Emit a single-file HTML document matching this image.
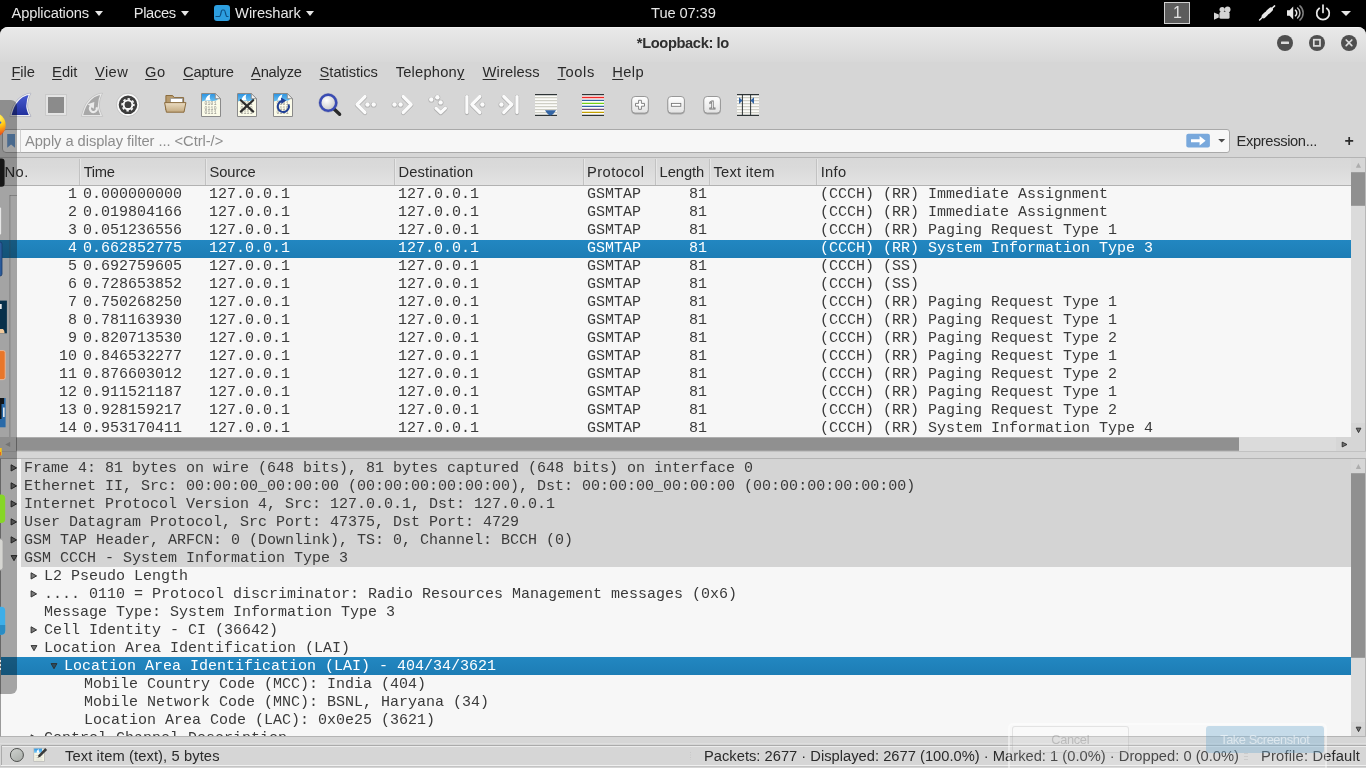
<!DOCTYPE html>
<html lang="en">
<head>
<meta charset="utf-8">
<title>*Loopback: lo</title>
<style>
html,body{margin:0;padding:0;}
body{width:1366px;height:768px;overflow:hidden;position:relative;background:#000;font-family:"Liberation Sans","DejaVu Sans",sans-serif;font-size:14.6px;color:#2e2e2e;}
#root{position:absolute;left:0;top:0;width:1366px;height:768px;overflow:hidden;will-change:transform;}
.abs{position:absolute;}
.t{position:absolute;white-space:nowrap;line-height:20px;}
/* top bar */
#topbar{position:absolute;left:0;top:0;width:1366px;height:27px;background:#000;color:#e6e6e6;}
#topbar .t{top:3px;font-size:14.8px;}
.tri{position:absolute;width:0;height:0;border-left:4.3px solid transparent;border-right:4.3px solid transparent;border-top:5px solid #e6e6e6;top:10.8px;}
/* window */
#win{position:absolute;left:0;top:27px;width:1366px;height:741px;background:#d6d6d6;border-radius:8px 8px 0 0;overflow:hidden;}
#titlebar{position:absolute;left:0;top:0;width:1366px;height:35px;background:linear-gradient(#e9e9e9,#d8d8d8);border-top:1px solid #f4f4f4;box-sizing:border-box;}
#title{position:absolute;left:0;width:1366px;text-align:center;top:6px;font-weight:bold;font-size:14.6px;color:#2f2f2f;line-height:20px;}
.wb{position:absolute;top:6.7px;width:16px;height:16px;border-radius:8px;background:#4f4f4f;}
/* menu */
#menu .t{top:35px;font-size:14.8px;color:#2a2a2a;}
.t u{text-decoration:underline;text-decoration-thickness:1px;text-underline-offset:2px;}
/* filter */
#filter{position:absolute;left:20px;top:102px;width:1210px;height:24px;background:#f7f7f7;border:1px solid #a9a9a9;border-radius:0 3px 3px 0;box-sizing:border-box;}
/* panes */
.mono{font-family:"Liberation Mono","DejaVu Sans Mono",monospace;font-size:15px;color:#3a3a3a;}
#plist{position:absolute;left:0;top:130px;width:1366px;height:294px;border-top:1px solid #b4b4b4;box-sizing:border-box;background:#f7f7f7;overflow:hidden;}
#phead{position:absolute;left:0;top:0;width:1351px;height:28px;background:linear-gradient(#d8d8d8,#dadada 35%,#e3e3e3);border-bottom:1px solid #b2b2b2;box-sizing:border-box;}
#phead i{position:absolute;top:1px;width:1px;height:26px;background:#c2c2c2;box-shadow:1px 0 0 #e6e6e6;}
.row{position:absolute;left:0;width:1351px;height:18px;line-height:18px;white-space:pre;}
.row span{position:absolute;top:0;}
.sel{background:linear-gradient(#2287c1,#1d7db5);color:#fff;}
#detail{position:absolute;left:0;top:431px;width:1366px;height:279px;border-top:1px solid #b4b4b4;border-left:1px solid #9a9a9a;border-bottom:1px solid #b4b4b4;box-sizing:border-box;background:#f7f7f7;overflow:hidden;}
.drow{position:absolute;left:0;width:1351px;height:18px;line-height:18px;white-space:pre;}
.drow.g{background:#d4d4d4;left:20px;width:1330px;}
.drow b{position:absolute;top:0;font-weight:normal;}
</style>
</head>
<body>
<div id="root">
<div id="topbar">
  <div class="tri" style="left:94.5px"></div><div class="tri" style="left:181px"></div><div class="tri" style="left:305.5px"></div>
  <svg class="abs" style="left:214px;top:5px" width="16" height="16" viewBox="0 0 16 16"><rect x="0" y="0" width="16" height="16" rx="3" fill="#2d9fe0"/><path d="M1.5 11.5 H5.5 C7 11.5 6.8 5 8.3 5 H10.2 C11.5 5 11.5 11.5 13 11.5 H14.5" fill="none" stroke="#0d4f82" stroke-width="1.2"/></svg>
  <div class="abs" style="left:1164px;top:2px;width:26px;height:22px;background:#5c5c5c;border:1px solid #cfcfcf;box-sizing:border-box;"></div>
  <div class="t" style="left:1173px;color:#e0e0e0;font-size:16px;top:3px">1</div>
  <div class="tri" style="left:1341px;border-left-width:5px;border-right-width:5px;border-top-width:5.2px;top:10.8px"></div>
</div>
<div id="win">
  <div id="titlebar">
    <div class="wb" style="left:1277px"></div>
    <div class="wb" style="left:1309px"></div>
    <div class="wb" style="left:1341px"></div>
  </div>
  <svg class="abs" style="left:0;top:61px" width="780" height="36" viewBox="0 88 780 36">
<defs>
<linearGradient id="gfin" x1="0" y1="0" x2="0" y2="1"><stop offset="0" stop-color="#4c5fd6"/><stop offset="1" stop-color="#1e2d9a"/></linearGradient>
<linearGradient id="gfold" x1="0" y1="0" x2="0" y2="1"><stop offset="0" stop-color="#eadcc2"/><stop offset="1" stop-color="#c4aa80"/></linearGradient>
<linearGradient id="gbtn" x1="0" y1="0" x2="0" y2="1"><stop offset="0" stop-color="#ffffff"/><stop offset="1" stop-color="#e2e2e2"/></linearGradient>
<linearGradient id="ghead" x1="0" y1="0" x2="0" y2="1"><stop offset="0" stop-color="#2e95e2"/><stop offset="1" stop-color="#6cc0f0"/></linearGradient>
<radialGradient id="gglass" cx="0.4" cy="0.35" r="0.7"><stop offset="0" stop-color="#ffffff"/><stop offset="1" stop-color="#c4c4c4"/></radialGradient>
<path id="fin" d="M31 93.1 C25.4 93.6 19.4 96.5 14.65 103.4 C12.4 107 10.9 111.5 9.8 116.3 L31.1 116.4 C29.2 112.5 27.7 108.5 27.7 105.9 C27.7 102 28.7 97.5 31 93.1 Z"/>
<clipPath id="finclip"><use href="#fin"/></clipPath>
<g id="doc">
 <path d="M201.5 93.5 H215.3 L220.5 98.7 V116.5 H201.5 Z" fill="#fbfbe9" stroke="#8a8a8a" stroke-width="1"/>
 <path d="M202 94 H215 L217.5 96.5 V100 C212 102.5 207 99 202 101.5 Z" fill="url(#ghead)"/>
 <path d="M210.5 94.3 C207.5 95.3 206 97.6 205.4 100.2 L210.6 100.2 C209.6 98.4 209.4 96.3 210.5 94.3 Z" fill="#fff"/>
 <path d="M215.3 93.5 V98.7 H220.5 Z" fill="#f2f2f2" stroke="#8a8a8a" stroke-width="0.9" stroke-linejoin="round"/>
 <g font-family="'Liberation Mono','DejaVu Sans Mono',monospace" font-size="4.7" fill="#8e8e88" letter-spacing="0.2">
  <text x="204.6" y="104.8">0101</text><text x="204.6" y="109.6">0110</text><text x="204.6" y="114.3">0111</text>
 </g>
</g>
<g id="chevL"><path d="M8.6 0 L0.6 8 L8.6 16" fill="none" stroke="#a6a6a6" stroke-width="4.3" stroke-linecap="round" stroke-linejoin="round" transform="translate(0,0.5)" opacity="0.8"/><path d="M8.6 0 L0.6 8 L8.6 16" fill="none" stroke="#fbfbfb" stroke-width="3.2" stroke-linecap="round" stroke-linejoin="round"/></g>
<g id="chevR"><path d="M0 0 L8 8 L0 16" fill="none" stroke="#a6a6a6" stroke-width="4.3" stroke-linecap="round" stroke-linejoin="round" transform="translate(0,0.5)" opacity="0.8"/><path d="M0 0 L8 8 L0 16" fill="none" stroke="#fbfbfb" stroke-width="3.2" stroke-linecap="round" stroke-linejoin="round"/></g>
<g id="dot"><circle cx="0" cy="0.25" r="2.85" fill="#a6a6a6" opacity="0.8"/><circle cx="0" cy="0" r="2.2" fill="#fbfbfb"/></g>
<g id="vbar"><path d="M0 0 V16" stroke="#a6a6a6" stroke-width="4.3" stroke-linecap="round" transform="translate(0,0.5)" opacity="0.8"/><path d="M0 0 V16" stroke="#fbfbfb" stroke-width="3.2" stroke-linecap="round"/></g>
<g id="zbtn"><rect x="0.2" y="1.2" width="17.3" height="17.2" rx="3.8" fill="#8a8a8a" opacity="0.6"/><rect x="0.5" y="0.5" width="16.6" height="16.6" rx="3.4" fill="url(#gbtn)" stroke="#8e8e8e" stroke-width="0.9"/></g>
<g id="lines"><rect x="0" y="0.5" width="22" height="21" fill="#fbfbf8"/>
 <path d="M0 3.5H22M0 6.5H22M0 9.5H22M0 12.5H22M0 15.5H22M0 18.5H22" stroke="#cfcfc5" stroke-width="1.25"/>
 <path d="M0 0.6H22M0 21.4H22" stroke="#2e3436" stroke-width="1.2"/></g>
</defs>
<!-- 1 start capture -->
<use href="#fin" fill="url(#gfin)"/>
<use href="#fin" fill="none" stroke="#f1f1f4" stroke-width="3" stroke-linejoin="round" clip-path="url(#finclip)"/>
<use href="#fin" fill="none" stroke="#b9b9b9" stroke-width="0.6" stroke-linejoin="round"/>
<!-- 2 stop -->
<rect x="45.6" y="94.6" width="20.8" height="20.8" fill="#e4e4e4" stroke="#c6c6c6" stroke-width="0.9"/>
<rect x="48" y="97" width="16" height="16" fill="#8b8b8b"/>
<!-- 3 restart -->
<g transform="translate(71.6,0)">
<use href="#fin" fill="#a8a8a8"/>
<use href="#fin" fill="none" stroke="#e9e9e9" stroke-width="3" stroke-linejoin="round" clip-path="url(#finclip)"/>
<use href="#fin" fill="none" stroke="#bdbdbd" stroke-width="0.6" stroke-linejoin="round"/>
<path d="M24.9 107.2 A3.4 3.4 0 1 1 19.6 106" fill="none" stroke="#ebebeb" stroke-width="2.1"/>
<path d="M16 104.3 L22.7 102.1 L22.2 108.7 Z" fill="#ebebeb"/>
</g>
<!-- 4 options gear -->
<circle cx="128" cy="104.8" r="10.3" fill="#3d3d3d" stroke="#f8f8f8" stroke-width="2"/>
<circle cx="128" cy="104.8" r="11.5" fill="none" stroke="#b4b4b4" stroke-width="0.6"/>
<circle cx="128" cy="104.8" r="5.9" fill="none" stroke="#f6f6f6" stroke-width="1.6" stroke-dasharray="2.4 2.234" transform="rotate(-10 128 104.8)"/>
<circle cx="128" cy="104.8" r="4.3" fill="none" stroke="#f6f6f6" stroke-width="2.1"/>
<circle cx="128" cy="104.8" r="3.3" fill="#3d3d3d"/>
<!-- 5 open folder -->
<path d="M165.9 95.5 H172.6 L174.2 97.6 H183.6 V110 H165.9 Z" fill="#b79a6c" stroke="#8b6c3e" stroke-width="1" stroke-linejoin="round"/>
<rect x="170.6" y="98.4" width="12" height="7" fill="#ffffff" stroke="#9a9a9a" stroke-width="0.8"/>
<path d="M164.6 102.6 H185.9 L184 112.2 H166.4 Z" fill="url(#gfold)" stroke="#8b6c3e" stroke-width="1" stroke-linejoin="round"/>
<!-- 6-8 docs -->
<use href="#doc"/>
<use href="#doc" x="36"/>
<path d="M240.8 100.2 L253.2 111.6 M253.2 100.2 L240.8 111.6" stroke="#2b2b2b" stroke-width="2.2" stroke-linecap="round"/>
<use href="#doc" x="72"/>
<path d="M288.5 104.3 A5.6 5.6 0 1 1 282 101" fill="none" stroke="#1f3f96" stroke-width="2"/>
<path d="M281 97.6 L286.2 100.6 L281.4 104 Z" fill="#1f3f96"/>
<!-- 9 find -->
<path d="M334.3 109.3 L339.6 114.3" stroke="#2a2a2a" stroke-width="3.4" stroke-linecap="round"/>
<circle cx="328.2" cy="102.8" r="8" fill="url(#gglass)" stroke="#3a4cb4" stroke-width="2.5"/><circle cx="328.2" cy="102.8" r="9.3" fill="none" stroke="#2a3890" stroke-width="0.5" opacity="0.6"/>
<!-- 10 back -->
<use href="#chevL" x="356.4" y="96.5"/><use href="#dot" x="367.5" y="104.5"/><use href="#dot" x="373.7" y="104.5"/>
<!-- 11 forward -->
<use href="#dot" x="394.5" y="104.5"/><use href="#dot" x="400.6" y="104.5"/><use href="#chevR" x="403.2" y="96.5"/>
<!-- 12 goto -->
<use href="#dot" x="431.3" y="99.5"/><use href="#dot" x="437.4" y="97.3"/><use href="#dot" x="440.6" y="102.4"/>
<path d="M436 108.1 L440.7 112.6 L445.4 108.1" fill="none" stroke="#a6a6a6" stroke-width="4.3" stroke-linecap="round" stroke-linejoin="round" transform="translate(0,0.5)" opacity="0.8"/>
<path d="M436 108.1 L440.7 112.6 L445.4 108.1" fill="none" stroke="#fbfbfb" stroke-width="3.2" stroke-linecap="round" stroke-linejoin="round"/>
<!-- 13 first -->
<use href="#vbar" x="466.9" y="96.5"/><use href="#chevL" x="471.2" y="96.5"/><use href="#dot" x="482.4" y="104.5"/>
<!-- 14 last -->
<use href="#dot" x="501.4" y="104.5"/><use href="#chevR" x="503.8" y="96.5"/><use href="#vbar" x="517" y="96.5"/>
<!-- 15 autoscroll -->
<use href="#lines" x="535" y="94"/>
<path d="M545 110.2 H556 C554.6 112.6 552.4 115.4 550.5 115.6 C548.6 115.4 546.4 112.6 545 110.2 Z" fill="#3465a4"/>
<!-- 16 colorize -->
<rect x="582" y="94.5" width="22" height="21" fill="#fdfdfb"/>
<path d="M582 97.5H604" stroke="#ef2929" stroke-width="1.3"/>
<path d="M582 100.45H604" stroke="#3465a4" stroke-width="1.3"/>
<path d="M582 103.4H604" stroke="#73d216" stroke-width="1.3"/>
<path d="M582 106.35H604" stroke="#3465a4" stroke-width="1.3"/>
<path d="M582 109.4H604" stroke="#75507b" stroke-width="1.3"/>
<path d="M582 112.4H604" stroke="#c4a000" stroke-width="1.3"/>
<path d="M582 94.6H604M582 115.4H604" stroke="#2e3436" stroke-width="1.2"/>
<!-- 17-19 zoom -->
<use href="#zbtn" x="631.2" y="96"/>
<path d="M638.6 100.3 h2.8 v3.1 h3.1 v2.8 h-3.1 v3.1 h-2.8 v-3.1 h-3.1 v-2.8 h3.1 Z" fill="#fff" stroke="#777" stroke-width="0.9" stroke-linejoin="round"/>
<use href="#zbtn" x="667.3" y="96"/>
<rect x="671.4" y="103.4" width="9.4" height="2.9" fill="#fff" stroke="#777" stroke-width="0.9"/>
<use href="#zbtn" x="703.3" y="96"/>
<text x="712.1" y="109.2" text-anchor="middle" font-family="'Liberation Sans','DejaVu Sans',sans-serif" font-weight="bold" font-size="11.5" fill="#fff" stroke="#777" stroke-width="0.8">1</text>
<!-- 20 resize columns -->
<use href="#lines" x="737" y="94"/>
<path d="M742.4 94.5V115.5M750.6 94.5V115.5" stroke="#2e3436" stroke-width="1"/>
<path d="M739 97.2 V104 L742.6 100.6 Z" fill="#3465a4"/>
<path d="M754 97.2 V104 L750.4 100.6 Z" fill="#3465a4"/>
</svg>

  <div id="filter"></div>
  <div id="plist">
    <div id="phead"><i style="left:79px"></i><i style="left:205px"></i><i style="left:394px"></i><i style="left:583px"></i><i style="left:655px"></i><i style="left:709px"></i><i style="left:816px"></i></div>
    <div class="row mono" style="top:28px"><span style="left:0;width:77px;text-align:right">1</span><span style="left:83px">0.000000000</span><span style="left:209px">127.0.0.1</span><span style="left:398px">127.0.0.1</span><span style="left:587px">GSMTAP</span><span style="left:653px;width:54px;text-align:right">81</span><span style="left:820px">(CCCH) (RR) Immediate Assignment</span></div>
<div class="row mono" style="top:46px"><span style="left:0;width:77px;text-align:right">2</span><span style="left:83px">0.019804166</span><span style="left:209px">127.0.0.1</span><span style="left:398px">127.0.0.1</span><span style="left:587px">GSMTAP</span><span style="left:653px;width:54px;text-align:right">81</span><span style="left:820px">(CCCH) (RR) Immediate Assignment</span></div>
<div class="row mono" style="top:64px"><span style="left:0;width:77px;text-align:right">3</span><span style="left:83px">0.051236556</span><span style="left:209px">127.0.0.1</span><span style="left:398px">127.0.0.1</span><span style="left:587px">GSMTAP</span><span style="left:653px;width:54px;text-align:right">81</span><span style="left:820px">(CCCH) (RR) Paging Request Type 1</span></div>
<div class="row mono sel" style="top:82px"><span style="left:0;width:77px;text-align:right">4</span><span style="left:83px">0.662852775</span><span style="left:209px">127.0.0.1</span><span style="left:398px">127.0.0.1</span><span style="left:587px">GSMTAP</span><span style="left:653px;width:54px;text-align:right">81</span><span style="left:820px">(CCCH) (RR) System Information Type 3</span></div>
<div class="row mono" style="top:100px"><span style="left:0;width:77px;text-align:right">5</span><span style="left:83px">0.692759605</span><span style="left:209px">127.0.0.1</span><span style="left:398px">127.0.0.1</span><span style="left:587px">GSMTAP</span><span style="left:653px;width:54px;text-align:right">81</span><span style="left:820px">(CCCH) (SS)</span></div>
<div class="row mono" style="top:118px"><span style="left:0;width:77px;text-align:right">6</span><span style="left:83px">0.728653852</span><span style="left:209px">127.0.0.1</span><span style="left:398px">127.0.0.1</span><span style="left:587px">GSMTAP</span><span style="left:653px;width:54px;text-align:right">81</span><span style="left:820px">(CCCH) (SS)</span></div>
<div class="row mono" style="top:136px"><span style="left:0;width:77px;text-align:right">7</span><span style="left:83px">0.750268250</span><span style="left:209px">127.0.0.1</span><span style="left:398px">127.0.0.1</span><span style="left:587px">GSMTAP</span><span style="left:653px;width:54px;text-align:right">81</span><span style="left:820px">(CCCH) (RR) Paging Request Type 1</span></div>
<div class="row mono" style="top:154px"><span style="left:0;width:77px;text-align:right">8</span><span style="left:83px">0.781163930</span><span style="left:209px">127.0.0.1</span><span style="left:398px">127.0.0.1</span><span style="left:587px">GSMTAP</span><span style="left:653px;width:54px;text-align:right">81</span><span style="left:820px">(CCCH) (RR) Paging Request Type 1</span></div>
<div class="row mono" style="top:172px"><span style="left:0;width:77px;text-align:right">9</span><span style="left:83px">0.820713530</span><span style="left:209px">127.0.0.1</span><span style="left:398px">127.0.0.1</span><span style="left:587px">GSMTAP</span><span style="left:653px;width:54px;text-align:right">81</span><span style="left:820px">(CCCH) (RR) Paging Request Type 2</span></div>
<div class="row mono" style="top:190px"><span style="left:0;width:77px;text-align:right">10</span><span style="left:83px">0.846532277</span><span style="left:209px">127.0.0.1</span><span style="left:398px">127.0.0.1</span><span style="left:587px">GSMTAP</span><span style="left:653px;width:54px;text-align:right">81</span><span style="left:820px">(CCCH) (RR) Paging Request Type 1</span></div>
<div class="row mono" style="top:208px"><span style="left:0;width:77px;text-align:right">11</span><span style="left:83px">0.876603012</span><span style="left:209px">127.0.0.1</span><span style="left:398px">127.0.0.1</span><span style="left:587px">GSMTAP</span><span style="left:653px;width:54px;text-align:right">81</span><span style="left:820px">(CCCH) (RR) Paging Request Type 2</span></div>
<div class="row mono" style="top:226px"><span style="left:0;width:77px;text-align:right">12</span><span style="left:83px">0.911521187</span><span style="left:209px">127.0.0.1</span><span style="left:398px">127.0.0.1</span><span style="left:587px">GSMTAP</span><span style="left:653px;width:54px;text-align:right">81</span><span style="left:820px">(CCCH) (RR) Paging Request Type 1</span></div>
<div class="row mono" style="top:244px"><span style="left:0;width:77px;text-align:right">13</span><span style="left:83px">0.928159217</span><span style="left:209px">127.0.0.1</span><span style="left:398px">127.0.0.1</span><span style="left:587px">GSMTAP</span><span style="left:653px;width:54px;text-align:right">81</span><span style="left:820px">(CCCH) (RR) Paging Request Type 2</span></div>
<div class="row mono" style="top:262px"><span style="left:0;width:77px;text-align:right">14</span><span style="left:83px">0.953170411</span><span style="left:209px">127.0.0.1</span><span style="left:398px">127.0.0.1</span><span style="left:587px">GSMTAP</span><span style="left:653px;width:54px;text-align:right">81</span><span style="left:820px">(CCCH) (RR) System Information Type 4</span></div>
  </div>
  <div id="detail">
    <div class="drow g" style="top:0px"></div><svg class="abs" style="left:9.1px;top:4px" width="9" height="10" viewBox="0 0 9 10"><path d="M1.1 1.8 L6.6 4.9 L1.1 8 Z" fill="rgba(45,45,45,0.62)" stroke="#2c2c2c" stroke-width="0.95"/></svg><div class="drow mono" style="top:1px;left:23px;width:auto;">Frame 4: 81 bytes on wire (648 bits), 81 bytes captured (648 bits) on interface 0</div>
<div class="drow g" style="top:18px"></div><svg class="abs" style="left:9.1px;top:22px" width="9" height="10" viewBox="0 0 9 10"><path d="M1.1 1.8 L6.6 4.9 L1.1 8 Z" fill="rgba(45,45,45,0.62)" stroke="#2c2c2c" stroke-width="0.95"/></svg><div class="drow mono" style="top:19px;left:23px;width:auto;">Ethernet II, Src: 00:00:00_00:00:00 (00:00:00:00:00:00), Dst: 00:00:00_00:00:00 (00:00:00:00:00:00)</div>
<div class="drow g" style="top:36px"></div><svg class="abs" style="left:9.1px;top:40px" width="9" height="10" viewBox="0 0 9 10"><path d="M1.1 1.8 L6.6 4.9 L1.1 8 Z" fill="rgba(45,45,45,0.62)" stroke="#2c2c2c" stroke-width="0.95"/></svg><div class="drow mono" style="top:37px;left:23px;width:auto;">Internet Protocol Version 4, Src: 127.0.0.1, Dst: 127.0.0.1</div>
<div class="drow g" style="top:54px"></div><svg class="abs" style="left:9.1px;top:58px" width="9" height="10" viewBox="0 0 9 10"><path d="M1.1 1.8 L6.6 4.9 L1.1 8 Z" fill="rgba(45,45,45,0.62)" stroke="#2c2c2c" stroke-width="0.95"/></svg><div class="drow mono" style="top:55px;left:23px;width:auto;">User Datagram Protocol, Src Port: 47375, Dst Port: 4729</div>
<div class="drow g" style="top:72px"></div><svg class="abs" style="left:9.1px;top:76px" width="9" height="10" viewBox="0 0 9 10"><path d="M1.1 1.8 L6.6 4.9 L1.1 8 Z" fill="rgba(45,45,45,0.62)" stroke="#2c2c2c" stroke-width="0.95"/></svg><div class="drow mono" style="top:73px;left:23px;width:auto;">GSM TAP Header, ARFCN: 0 (Downlink), TS: 0, Channel: BCCH (0)</div>
<div class="drow g" style="top:90px"></div><svg class="abs" style="left:8.799999999999999px;top:95px" width="10" height="9" viewBox="0 0 10 9"><path d="M1.1 1.6 L6.9 1.6 L4 6.7 Z" fill="rgba(45,45,45,0.62)" stroke="#2c2c2c" stroke-width="0.95"/></svg><div class="drow mono" style="top:91px;left:23px;width:auto;">GSM CCCH - System Information Type 3</div>
<svg class="abs" style="left:29.1px;top:112px" width="9" height="10" viewBox="0 0 9 10"><path d="M1.1 1.8 L6.6 4.9 L1.1 8 Z" fill="rgba(45,45,45,0.62)" stroke="#2c2c2c" stroke-width="0.95"/></svg><div class="drow mono" style="top:109px;left:43px;width:auto;">L2 Pseudo Length</div>
<svg class="abs" style="left:29.1px;top:130px" width="9" height="10" viewBox="0 0 9 10"><path d="M1.1 1.8 L6.6 4.9 L1.1 8 Z" fill="rgba(45,45,45,0.62)" stroke="#2c2c2c" stroke-width="0.95"/></svg><div class="drow mono" style="top:127px;left:43px;width:auto;">.... 0110 = Protocol discriminator: Radio Resources Management messages (0x6)</div>
<div class="drow mono" style="top:145px;left:43px;width:auto;">Message Type: System Information Type 3</div>
<svg class="abs" style="left:29.1px;top:166px" width="9" height="10" viewBox="0 0 9 10"><path d="M1.1 1.8 L6.6 4.9 L1.1 8 Z" fill="rgba(45,45,45,0.62)" stroke="#2c2c2c" stroke-width="0.95"/></svg><div class="drow mono" style="top:163px;left:43px;width:auto;">Cell Identity - CI (36642)</div>
<svg class="abs" style="left:28.8px;top:185px" width="10" height="9" viewBox="0 0 10 9"><path d="M1.1 1.6 L6.9 1.6 L4 6.7 Z" fill="rgba(45,45,45,0.62)" stroke="#2c2c2c" stroke-width="0.95"/></svg><div class="drow mono" style="top:181px;left:43px;width:auto;">Location Area Identification (LAI)</div>
<div class="drow sel" style="top:198px"></div><svg class="abs" style="left:48.800000000000004px;top:203px" width="10" height="9" viewBox="0 0 10 9"><path d="M1.1 1.6 L6.9 1.6 L4 6.7 Z" fill="rgba(45,45,45,0.62)" stroke="#2c2c2c" stroke-width="0.95"/></svg><div class="drow mono" style="top:199px;left:63px;width:auto;color:#fff;">Location Area Identification (LAI) - 404/34/3621</div>
<div class="drow mono" style="top:217px;left:83px;width:auto;">Mobile Country Code (MCC): India (404)</div>
<div class="drow mono" style="top:235px;left:83px;width:auto;">Mobile Network Code (MNC): BSNL, Haryana (34)</div>
<div class="drow mono" style="top:253px;left:83px;width:auto;">Location Area Code (LAC): 0x0e25 (3621)</div>
<svg class="abs" style="left:29.1px;top:274px" width="9" height="10" viewBox="0 0 9 10"><path d="M1.1 1.8 L6.6 4.9 L1.1 8 Z" fill="rgba(45,45,45,0.62)" stroke="#2c2c2c" stroke-width="0.95"/></svg><div class="drow mono" style="top:271px;left:43px;width:auto;">Control Channel Description</div>
  </div>
</div>
<div class="t" style="left:11.5px;top:2.6px;font-size:14.7px;letter-spacing:-0.142px;color:#e6e6e6;">Applications</div>
<div class="t" style="left:133.8px;top:2.6px;font-size:14.7px;letter-spacing:-0.366px;color:#e6e6e6;">Places</div>
<div class="t" style="left:235.1px;top:2.6px;font-size:14.7px;letter-spacing:-0.057px;color:#e6e6e6;">Wireshark</div>
<div class="t" style="left:651.1px;top:2.6px;font-size:14.7px;letter-spacing:-0.112px;color:#e6e6e6;">Tue 07:39</div>
<div class="t" style="left:636.8px;top:32.9px;font-size:14.7px;letter-spacing:-0.385px;color:#2f2f2f;font-weight:bold;">*Loopback: lo</div>
<div class="t" style="left:11.5px;top:61.7px;font-size:14.7px;letter-spacing:-0.118px;color:#2a2a2a;"><u>F</u>ile</div>
<div class="t" style="left:52.1px;top:61.7px;font-size:14.7px;letter-spacing:-0.003px;color:#2a2a2a;"><u>E</u>dit</div>
<div class="t" style="left:95.1px;top:61.7px;font-size:14.7px;letter-spacing:0.355px;color:#2a2a2a;"><u>V</u>iew</div>
<div class="t" style="left:145.1px;top:61.7px;font-size:14.7px;letter-spacing:0.503px;color:#2a2a2a;"><u>G</u>o</div>
<div class="t" style="left:183.1px;top:61.7px;font-size:14.7px;letter-spacing:-0.238px;color:#2a2a2a;"><u>C</u>apture</div>
<div class="t" style="left:251.1px;top:61.7px;font-size:14.7px;letter-spacing:-0.238px;color:#2a2a2a;"><u>A</u>nalyze</div>
<div class="t" style="left:319.6px;top:61.7px;font-size:14.7px;letter-spacing:-0.047px;color:#2a2a2a;"><u>S</u>tatistics</div>
<div class="t" style="left:395.7px;top:61.7px;font-size:14.7px;letter-spacing:0.203px;color:#2a2a2a;">Telephon<u>y</u></div>
<div class="t" style="left:482.6px;top:61.7px;font-size:14.7px;letter-spacing:0.098px;color:#2a2a2a;"><u>W</u>ireless</div>
<div class="t" style="left:557.5px;top:61.7px;font-size:14.7px;letter-spacing:0.621px;color:#2a2a2a;"><u>T</u>ools</div>
<div class="t" style="left:612.2px;top:61.7px;font-size:14.7px;letter-spacing:0.445px;color:#2a2a2a;"><u>H</u>elp</div>
<div class="t" style="left:24.9px;top:131.1px;font-size:14.7px;letter-spacing:-0.049px;color:#8c8c8c;">Apply a display filter ... &lt;Ctrl-/&gt;</div>
<div class="t" style="left:1236.5px;top:131.1px;font-size:14.7px;letter-spacing:-0.347px;color:#2a2a2a;">Expression...</div>
<div class="t" style="left:4.6px;top:161.8px;font-size:14.7px;letter-spacing:0.380px;color:#2a2a2a;">No.</div>
<div class="t" style="left:83.7px;top:161.8px;font-size:14.7px;letter-spacing:-0.273px;color:#2a2a2a;">Time</div>
<div class="t" style="left:209.4px;top:161.8px;font-size:14.7px;letter-spacing:-0.041px;color:#2a2a2a;">Source</div>
<div class="t" style="left:398.5px;top:161.8px;font-size:14.7px;letter-spacing:0.120px;color:#2a2a2a;">Destination</div>
<div class="t" style="left:586.9px;top:161.8px;font-size:14.7px;letter-spacing:0.464px;color:#2a2a2a;">Protocol</div>
<div class="t" style="left:659.6px;top:161.8px;font-size:14.7px;letter-spacing:-0.056px;color:#2a2a2a;">Length</div>
<div class="t" style="left:713.4px;top:161.8px;font-size:14.7px;letter-spacing:0.282px;color:#2a2a2a;">Text item</div>
<div class="t" style="left:820.7px;top:161.8px;font-size:14.7px;letter-spacing:0.325px;color:#2a2a2a;">Info</div>
<div class="t" style="left:65.0px;top:745.9px;font-size:14.7px;letter-spacing:0.111px;color:#2a2a2a;">Text item (text), 5 bytes</div>
<div class="t" style="left:704.0px;top:745.9px;font-size:14.7px;letter-spacing:0.014px;color:#2a2a2a;">Packets: 2677 · Displayed: 2677 (100.0%) · Marked: 1 (0.0%) · Dropped: 0 (0.0%)</div>
<div class="t" style="left:1261.1px;top:745.9px;font-size:14.7px;letter-spacing:0.166px;color:#2a2a2a;">Profile: Default</div>
<!-- system tray + window buttons -->
<svg class="abs" style="left:1200px;top:0" width="166" height="60" viewBox="1200 0 166 60">
 <g fill="#d4d4d4">
  <circle cx="1222.2" cy="9.6" r="2.7"/><circle cx="1227.6" cy="9.4" r="2.9"/>
  <rect x="1219.4" y="11.8" width="10.2" height="7" rx="1.6"/>
  <path d="M1214 12.6 L1218.8 14.6 V17.6 L1214 19.8 Z"/>
 </g>
 <g stroke="#e8e8e8" stroke-linecap="round" fill="none">
  <path d="M1259.6 20 L1274.6 5.9" stroke-width="1.5"/>
  <path d="M1263.6 16.2 L1266.2 13.8" stroke-width="4.2"/>
  <path d="M1268.2 11.9 L1270.8 9.5" stroke-width="4.2"/>
 </g>
 <path d="M1287 10.3 H1289.6 L1293.2 6.6 V19.4 L1289.6 15.7 H1287 Z" fill="#e8e8e8"/>
 <g fill="none" stroke-linecap="round">
  <path d="M1295.4 10.2 A3.6 3.6 0 0 1 1295.4 15.8" stroke="#e8e8e8" stroke-width="1.5"/>
  <path d="M1297.6 8 A6.5 6.5 0 0 1 1297.6 18" stroke="#bdbdbd" stroke-width="1.5"/>
  <path d="M1299.9 5.9 A9.4 9.4 0 0 1 1299.9 20.1" stroke="#7d7d7d" stroke-width="1.5"/>
 </g>
 <path d="M1319.3 8.3 A6.3 6.3 0 1 0 1326.7 8.3" fill="none" stroke="#e8e8e8" stroke-width="1.7" stroke-linecap="round"/>
 <path d="M1323 5 V12.4" stroke="#e8e8e8" stroke-width="1.7" stroke-linecap="round"/>
 <!-- window buttons glyphs -->
 <rect x="1281" y="41.5" width="8" height="2.5" rx="0.6" fill="#dcdcdc"/>
 <rect x="1313.8" y="39.7" width="6.2" height="6.2" fill="none" stroke="#dcdcdc" stroke-width="1.7"/>
 <path d="M1346.2 40 L1351.8 45.6 M1351.8 40 L1346.2 45.6" stroke="#dcdcdc" stroke-width="1.7" stroke-linecap="round"/>
</svg>
<!-- filter bar bits -->
<svg class="abs" style="left:0;top:126px" width="1366" height="30" viewBox="0 126 1366 30">
 <path d="M20.5 129.5 H6 Q2.5 129.5 2.5 133 V149 Q2.5 152.5 6 152.5 H20.5" fill="#f7f7f7" stroke="#a9a9a9" stroke-width="1"/>
 <path d="M7.2 134 H15 V147.8 L11.1 144.6 L7.2 147.8 Z" fill="#709fd6"/>
 <rect x="1186.3" y="133.8" width="23.6" height="13.8" rx="2" fill="#78a8dc"/>
 <path d="M1191 139.2 H1199.6 V136 L1205.6 140.7 L1199.6 145.4 V142.2 H1191 Z" fill="#ffffff"/>
 <path d="M1218.2 138.9 H1225.2 L1221.7 142.6 Z" fill="#4a4a4a"/>
 <path d="M1345.2 140.9 H1353.2 M1349.2 136.9 V144.9" stroke="#2a2a2a" stroke-width="1.7"/>
</svg>
<!-- scrollbars -->
<svg class="abs" style="left:0;top:156px" width="1366" height="590" viewBox="0 156 1366 590">
 <!-- plist v-scroll -->
 <rect x="1351" y="158" width="14" height="279" fill="#dbdbdb"/>
 <rect x="1351" y="158" width="14" height="14" fill="#d6d6d6"/><rect x="1351" y="423" width="14" height="14" fill="#d6d6d6"/>
 <rect x="1351" y="172.2" width="14" height="33.6" fill="#909090"/>
 <path d="M1355.8 167.8 L1358.4 162.8 L1361 167.8 Z" fill="#adadad"/>
 <path d="M1356.2 428.2 H1360.9 L1358.55 432.6 Z" fill="rgba(50,50,50,0.6)" stroke="#2a2a2a" stroke-width="0.9"/>
 <path d="M1365.5 157 V451" stroke="#b8b8b8" stroke-width="1"/>
 <!-- plist h-scroll -->
 <rect x="0" y="437" width="1351" height="14" fill="#dbdbdb"/>
 <rect x="0" y="437" width="16" height="14" fill="#d6d6d6"/><rect x="1336" y="437" width="15" height="14" fill="#d6d6d6"/>
 <rect x="16" y="437.4" width="1223" height="13.4" fill="#909090"/>
 <path d="M10.2 441.8 V447 L5.2 444.4 Z" fill="#adadad"/>
 <path d="M1342.2 442.1 V446.9 L1347 444.5 Z" fill="rgba(50,50,50,0.6)" stroke="#2a2a2a" stroke-width="0.9"/>
 <rect x="1351" y="437" width="14" height="14" fill="#d6d6d6"/>
 <path d="M0 451.5 H1366" stroke="#c2c2c2" stroke-width="1"/>
 <!-- detail v-scroll -->
 <rect x="1351" y="459" width="14" height="277" fill="#dbdbdb"/>
 <rect x="1351" y="459" width="14" height="14" fill="#d6d6d6"/><rect x="1351" y="722" width="14" height="14" fill="#d6d6d6"/>
 <rect x="1351" y="473.2" width="14" height="184.6" fill="#909090"/>
 <path d="M1355.8 469 L1358.4 464 L1361 469 Z" fill="#adadad"/>
 <path d="M1356.2 727.2 H1360.9 L1358.55 731.6 Z" fill="rgba(50,50,50,0.6)" stroke="#2a2a2a" stroke-width="0.9"/>
 <path d="M1365.5 458 V737" stroke="#b8b8b8" stroke-width="1"/>
</svg>
<!-- status bar -->
<svg class="abs" style="left:0;top:736px" width="1366" height="32" viewBox="0 736 1366 32">
 <defs><linearGradient id="gled" x1="0" y1="0" x2="0.6" y2="1"><stop offset="0" stop-color="#cfd2cf"/><stop offset="1" stop-color="#aeb2ae"/></linearGradient>
 <linearGradient id="gh2" x1="0" y1="0" x2="0" y2="1"><stop offset="0" stop-color="#2e95e2"/><stop offset="1" stop-color="#7cc8f2"/></linearGradient></defs>
 <path d="M0 743.5 H1366" stroke="#dedede" stroke-width="1"/>
 <path d="M1.5 765 V745.5 H1366" fill="none" stroke="#ababab" stroke-width="1"/>
 <path d="M2 746.5 H1366" stroke="#ececec" stroke-width="1"/>
 <path d="M1 765.5 H1366" stroke="#f0f0f0" stroke-width="1"/>
 <path d="M0 766.5 H1366" stroke="#c4c4c4" stroke-width="1"/>
 <circle cx="16.9" cy="755" r="6.5" fill="url(#gled)" stroke="#4b4d4b" stroke-width="1"/>
 <rect x="33.8" y="748.3" width="10.6" height="13.2" fill="#f6f6e6" stroke="#b4b4b4" stroke-width="0.7"/>
 <rect x="34.1" y="748.6" width="8" height="4.2" fill="url(#gh2)"/>
 <path d="M38.6 749 C37.4 749.8 36.8 751 36.6 752.8 H39.4 C38.8 751.5 38.6 750.3 38.6 749 Z" fill="#fff"/>
 <path d="M35.5 755.5 H42.5 M35.5 757.8 H42.5 M35.5 760 H42.5" stroke="#d0d0c8" stroke-width="0.7"/>
 <path d="M46.2 749 L38.9 756.3" stroke="#3c3c3c" stroke-width="2.6"/>
 <path d="M39.4 755.2 L37.3 757.9 L40.2 756.4 Z" fill="#2a2a2a"/>
 <path d="M1244 753.5 H1248 M1244 756.5 H1248 M1244 759.5 H1248" stroke="#bcbcbc" stroke-width="0.8"/>
 <path d="M690.5 752 V760" stroke="#c4c4c4" stroke-width="0.8" stroke-dasharray="1 1.5"/>
</svg>
<!-- ghost screenshot dialog -->
<div class="abs" style="left:1008px;top:723px;width:319px;height:45px;background:rgba(255,255,255,0.15);border:2px solid rgba(255,255,255,0.38);border-bottom:none;border-radius:5px 5px 0 0;box-sizing:border-box;"></div>
<div class="abs" style="left:1011.5px;top:726px;width:117.5px;height:26.5px;border:1px solid rgba(150,150,150,0.22);border-radius:3px;box-sizing:border-box;background:rgba(255,255,255,0.10);"></div>
<div class="t" style="left:1011.5px;top:729.5px;width:117.5px;text-align:center;font-size:12.8px;color:rgba(120,120,120,0.36);letter-spacing:-0.33px">Cancel</div>
<div class="abs" style="left:1205.5px;top:726px;width:118.5px;height:26.5px;border-radius:3px;background:rgba(100,164,206,0.34);"></div>
<div class="t" style="left:1205.5px;top:729.5px;width:118.5px;text-align:center;font-size:12.8px;color:rgba(255,255,255,0.55);letter-spacing:-0.41px">Take Screenshot</div>
<!-- dock overlay -->
<div class="abs" style="left:0;top:100px;width:17px;height:594px;background:rgba(0,0,0,0.335);border-radius:0 6px 6px 0;"></div>
<svg class="abs" style="left:0;top:100px" width="20" height="600" viewBox="0 100 20 600">
 <defs><radialGradient id="gff" cx="0.72" cy="0.22" r="0.75"><stop offset="0" stop-color="#fff36a"/><stop offset="0.4" stop-color="#ffc814"/><stop offset="0.85" stop-color="#ee5a1a"/><stop offset="1" stop-color="#d8401a"/></radialGradient>
 <clipPath id="cdock"><rect x="0" y="100" width="17" height="594"/></clipPath></defs>
 <path d="M9.9 195.5 H17 M9.9 195 V437" stroke="rgba(60,60,60,0.35)" stroke-width="1" fill="none"/>
 <circle cx="-6.6" cy="125" r="12.3" fill="url(#gff)"/>
 <circle cx="0.3" cy="122.6" r="1.1" fill="#3a6ad0"/>
 <rect x="-4" y="158.5" width="8.6" height="28.2" rx="3" fill="#171717"/>
 <rect x="-4" y="207.5" width="5.1" height="27" rx="1" fill="#e6e6e6"/>
 <rect x="-4" y="242" width="6" height="34" rx="2" fill="#2c5c9c" stroke="#173a6a" stroke-width="0.8"/>
 <rect x="-4" y="300.6" width="10.9" height="32.7" fill="#08304a"/>
 <rect x="0" y="304" width="1.7" height="5" fill="#e8e8e8"/>
 <path d="M0 329 H3 Q4.6 330.5 4.6 333.3 H0 Z" fill="#f0c89a"/>
 <rect x="-4" y="350.6" width="9.2" height="29" rx="2" fill="#e8762a" stroke="#f2c0a0" stroke-width="0.8"/>
 <rect x="-4" y="398" width="9.6" height="29.3" fill="#2a6aa8"/>
 <path d="M0 398 H4 V404 H1.5 V419 H0 Z" fill="#101418"/>
 <rect x="3.1" y="407.5" width="1.5" height="9.5" fill="#f2f2f2"/>
 <rect x="-2" y="448" width="3.7" height="7.4" fill="#f6c21a"/><rect x="-2" y="452" width="2.6" height="3.4" fill="#e0301a"/>
 <rect x="-6" y="494.6" width="11.2" height="28.4" rx="4" fill="#86d626"/>
 <rect x="-6" y="538.8" width="9.1" height="31.4" rx="3" fill="#d6d6d2" stroke="#9a9a9a" stroke-width="0.8"/>
 <rect x="-6" y="606.7" width="11.2" height="28.1" rx="4" fill="#3daee9"/>
 <path d="M0 625 H5.2 V630.8 Q5.2 634.8 1.2 634.8 H0 Z" fill="#2a8cc4"/>
 <path d="M0.5 660 V672" stroke="#e0e0e0" stroke-width="1" stroke-dasharray="2 2"/>
</svg>

</div>
</body>
</html>
